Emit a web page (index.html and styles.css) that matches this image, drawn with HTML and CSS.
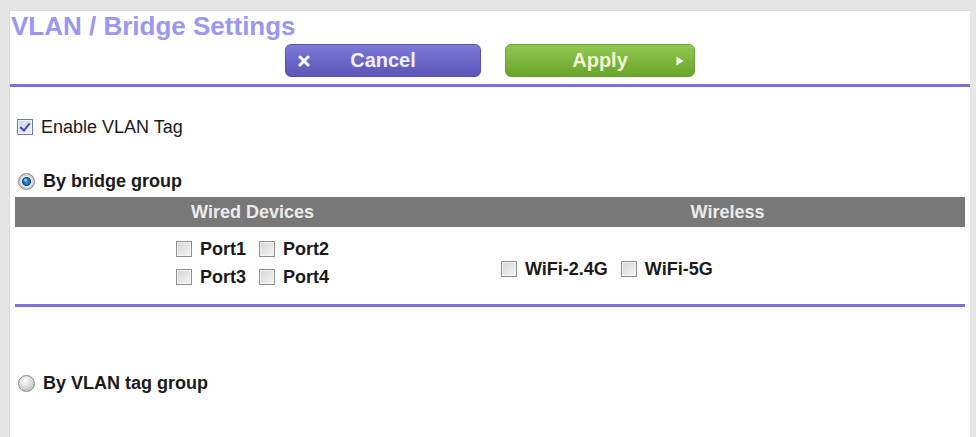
FILE: index.html
```html
<!DOCTYPE html>
<html lang="en">
<head>
  <meta charset="UTF-8" />
  <title>VLAN / Bridge Settings</title>
  <link rel="stylesheet" href="styles.css">
</head>
<body>
  <div class="frame">
    <div class="panel">

      <h1 class="title">VLAN / Bridge Settings</h1>

      <div class="actions">
        <button type="button" class="btn btn-cancel">
          <svg class="btn-icon-x" width="12" height="12" viewBox="0 0 12 12">
            <path d="M2 2 L10 10 M10 2 L2 10" stroke="#fff" stroke-width="3" stroke-linecap="round" />
          </svg>
          <span>Cancel</span>
        </button>
        <button type="button" class="btn btn-apply">
          <span>Apply</span>
          <svg class="btn-icon-arrow" width="8" height="10" viewBox="0 0 8 10">
            <path d="M0.5 0.5 L7.5 5 L0.5 9.5 Z" fill="#fff" />
          </svg>
        </button>
      </div>

      <div class="rule"></div>

      <div class="content">
        <label class="opt opt-check">
          <input type="checkbox" class="chk" checked />
          <span>Enable VLAN Tag</span>
        </label>

        <label class="opt opt-bold opt-bridge">
          <input type="radio" class="rad" name="mode" checked />
          <span>By bridge group</span>
        </label>

        <table class="groups">
          <thead>
            <tr>
              <th>Wired Devices</th>
              <th>Wireless</th>
            </tr>
          </thead>
          <tbody>
            <tr>
              <td class="cell-wired">
                <div class="port-row">
                  <label class="item"><input type="checkbox" class="chk" /><span>Port1</span></label>
                  <label class="item"><input type="checkbox" class="chk" /><span>Port2</span></label>
                </div>
                <div class="port-row">
                  <label class="item"><input type="checkbox" class="chk" /><span>Port3</span></label>
                  <label class="item"><input type="checkbox" class="chk" /><span>Port4</span></label>
                </div>
              </td>
              <td class="cell-wireless">
                <div class="port-row">
                  <label class="item"><input type="checkbox" class="chk" /><span>WiFi-2.4G</span></label>
                  <label class="item"><input type="checkbox" class="chk" /><span>WiFi-5G</span></label>
                </div>
              </td>
            </tr>
          </tbody>
        </table>

        <label class="opt opt-bold opt-vlan">
          <input type="radio" class="rad" name="mode" />
          <span>By VLAN tag group</span>
        </label>
      </div>

    </div>
  </div>
</body>
</html>
```

FILE: styles.css
```css
html, body {
  margin: 0;
  height: 100%;
}

body {
  font-family: "Liberation Sans", Arial, sans-serif;
  background-color: #e6e6e6;
  color: #1a1a1a;
}

.frame {
  box-sizing: border-box;
  height: 100%;
  padding: 10px 6px 0 9px;
}

.panel {
  background-color: #fff;
  height: 100%;
  border-left: 1px solid #dadada;
  border-top: 1px solid #dadada;
  box-sizing: border-box;
}

.title {
  margin: 0;
  padding-left: 1px;
  font-size: 26px;
  line-height: 30px;
  font-weight: bold;
  color: #9b97f2;
}

.actions {
  display: flex;
  justify-content: center;
  gap: 24px;
  margin-top: 3px;
}

.btn {
  position: relative;
  height: 33px;
  border-radius: 6px;
  font-family: inherit;
  font-size: 20px;
  font-weight: bold;
  cursor: pointer;
  padding: 0;
}

.btn-cancel {
  width: 196px;
  border: 1px solid #5752a8;
  color: #f0f0fb;
  background: linear-gradient(#7d7ad8, #6b67c7 50%, #5c57b4);
}

.btn-apply {
  width: 190px;
  border: 1px solid #6a9f33;
  color: #f2f6d6;
  background: linear-gradient(#93c955, #7db73c 50%, #6aa42b);
}

.btn-icon-x {
  position: absolute;
  left: 12px;
  top: 10px;
}

.btn-icon-arrow {
  position: absolute;
  right: 10px;
  top: 11px;
}

.rule {
  height: 3px;
  margin-top: 7px;
  background-color: #7a72d8;
}

.content {
  padding: 0 5px;
}

.opt {
  display: flex;
  align-items: center;
  height: 22px;
  font-size: 18px;
}

.opt-check {
  margin-top: 29px;
  padding-left: 2px;
  gap: 8px;
}

.opt-bold {
  font-weight: bold;
  padding-left: 3px;
  gap: 8px;
}

.opt-bridge {
  margin-top: 32px;
}

.opt-vlan {
  margin-top: 66px;
}

.chk {
  appearance: none;
  position: relative;
  box-sizing: border-box;
  width: 16px;
  height: 16px;
  margin: 0;
  border: 1px solid #8e8f8f;
  background: linear-gradient(135deg, #d4d4d4, #f6f6f6);
  box-shadow: inset 0 0 0 1px #f4f4f4;
}

.chk:checked {
  background: linear-gradient(135deg, #c9d2ea, #f2f5fb);
  border-color: #6d7ba8;
}

.chk:checked::after {
  content: "";
  position: absolute;
  left: 4px;
  top: 1px;
  width: 4px;
  height: 8px;
  border: solid #3f4cb3;
  border-width: 0 2px 2px 0;
  transform: rotate(40deg);
}

.rad {
  appearance: none;
  box-sizing: border-box;
  width: 17px;
  height: 17px;
  margin: 0;
  border-radius: 50%;
  border: 1px solid #8a8a8a;
  background: radial-gradient(circle at 6px 5px, #ffffff 0, #e8e8e8 4px, #bdbdbd 11px);
}

.rad:checked {
  background:
    radial-gradient(circle at 6.5px 6px, rgba(255, 255, 255, 0.9) 0, rgba(255, 255, 255, 0) 2px),
    radial-gradient(circle at 7.5px 7.5px, #3a9ae6 0, #1c6cc4 3px, #0d4c98 4.2px, #f2f2f2 4.8px, #dcdcdc 6px, #b9b9b9 8px);
}

.groups {
  width: 100%;
  border-collapse: collapse;
  margin-top: 5px;
  border-bottom: 3px solid #7a72d8;
  font-size: 18px;
}

.groups th {
  width: 50%;
  height: 30px;
  padding: 0;
  background-color: #787878;
  color: #ececec;
  font-weight: bold;
  text-align: center;
}

.groups td {
  height: 78px;
  padding: 0;
  box-sizing: border-box;
}

.cell-wired {
  padding-top: 8px !important;
  vertical-align: top;
}

.cell-wired .port-row {
  justify-content: center;
}

.cell-wireless {
  vertical-align: middle;
  padding: 8px 0 0 11px !important;
}

.port-row {
  display: flex;
  align-items: center;
  gap: 13px;
  height: 28px;
  font-weight: bold;
}

.item {
  display: flex;
  align-items: center;
  gap: 8px;
}
```
